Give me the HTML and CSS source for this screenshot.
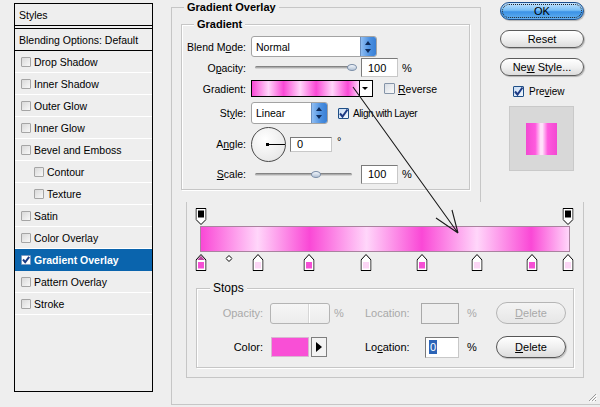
FILE: index.html
```html
<!DOCTYPE html>
<html lang="en">
<head>
  <meta charset="UTF-8" />
  <meta name="viewport" content="width=device-width, initial-scale=1.0"/>
  <title>Layer Style - Gradient Overlay</title>
  <link rel="stylesheet" href="styles.css">
</head>
<body>
  <div class="dialog">
    <ul class="styles-list">
      <li class="head">Styles</li>
      <li class="blend">Blending Options: Default</li>
      <li><span class="cb"></span>Drop Shadow</li>
      <li><span class="cb"></span>Inner Shadow</li>
      <li><span class="cb"></span>Outer Glow</li>
      <li><span class="cb"></span>Inner Glow</li>
      <li><span class="cb"></span>Bevel and Emboss</li>
      <li class="sub"><span class="cb"></span>Contour</li>
      <li class="sub"><span class="cb"></span>Texture</li>
      <li><span class="cb"></span>Satin</li>
      <li><span class="cb"></span>Color Overlay</li>
      <li class="active">
        <span class="cb on"><svg viewBox="0 0 10 10" width="10" height="10"><path d="M2 4.5L4.2 7.2L8.2 1.8" fill="none" stroke="#1b3b86" stroke-width="2"/></svg></span>Gradient Overlay
      </li>
      <li><span class="cb"></span>Pattern Overlay</li>
      <li><span class="cb"></span>Stroke</li>
    </ul>

    <div class="content">
      <div class="top-row">
        <div class="overlay-group">
          <div class="group-title">Gradient Overlay</div>

          <div class="gradient-group">
            <div class="group-title">Gradient</div>

            <div class="row r1">
              <label>Blend M<u>o</u>de:</label>
              <div class="select blend-sel"><span class="val">Normal</span><span class="spin"></span></div>
            </div>

            <div class="row r2">
              <label>O<u>p</u>acity:</label>
              <div class="slider"><span class="thumb" style="left:100%"></span></div>
              <div class="field num">100</div>
              <span class="unit">%</span>
            </div>

            <div class="row r3">
              <label>Gradient:</label>
              <div class="grad-field"></div>
              <div class="grad-drop"></div>
              <span class="chk"></span>
              <span class="chk-label"><u>R</u>everse</span>
            </div>

            <div class="row r4">
              <label>St<u>y</u>le:</label>
              <div class="select style-sel"><span class="val">Linear</span><span class="spin"></span></div>
              <span class="chk on"><svg viewBox="0 0 11 11" width="11" height="11"><path d="M2 5.5L4.5 8.5L9.5 1.5" fill="none" stroke="#1d3a84" stroke-width="2"/></svg></span>
              <span class="chk-label small">Ali<u>g</u>n with Layer</span>
            </div>

            <div class="row r5">
              <label>A<u>n</u>gle:</label>
              <div class="dial"><div class="hand"><span class="dot"></span><span class="stick"></span></div></div>
              <div class="field angle">0</div>
              <span class="deg">&deg;</span>
            </div>

            <div class="row r6">
              <label><u>S</u>cale:</label>
              <div class="slider"><span class="thumb" style="left:63%"></span></div>
              <div class="field num">100</div>
              <span class="unit">%</span>
            </div>
          </div>
        </div>

        <div class="buttons">
          <button class="btn ok">OK</button>
          <button class="btn">Reset</button>
          <button class="btn">Ne<u>w</u> Style...</button>
          <div class="preview-row">
            <span class="chk on"><svg viewBox="0 0 11 11" width="11" height="11"><path d="M2 5.5L4.5 8.5L9.5 1.5" fill="none" stroke="#1d3a84" stroke-width="2"/></svg></span>
            <span class="chk-label preview">Pre<u>v</u>iew</span>
          </div>
          <div class="preview-box"><div class="preview-swatch"></div></div>
        </div>
      </div>

      <div class="editor">
        <div class="strip">
          <div class="stops-top">
            <svg class="stop" style="left:0.4%" viewBox="0 0 11 17" width="11" height="17"><path d="M0.5 0.5H10.5V11.5L5.5 16.5L0.5 11.5Z" fill="#fff" stroke="#000"/><rect x="2.5" y="2.5" width="6" height="7" fill="#000"/></svg>
            <svg class="stop" style="left:99.5%" viewBox="0 0 11 17" width="11" height="17"><path d="M0.5 0.5H10.5V11.5L5.5 16.5L0.5 11.5Z" fill="#fff" stroke="#000"/><rect x="2.5" y="2.5" width="6" height="7" fill="#000"/></svg>
          </div>
          <div class="bar"></div>
          <div class="stops-bottom">
            <svg class="stop" style="left:0.4%" viewBox="0 0 11 17" width="11" height="17"><path d="M5.5 0.5L10.5 6V16.5H0.5V6Z" fill="#fff" stroke="#000"/><path d="M5.5 1.8L9.3 6H1.7Z" fill="#b9489d"/><rect x="2.5" y="8" width="6" height="6.5" fill="#f64fd5"/></svg>
            <svg class="mid" style="left:7.8%" viewBox="0 0 7 7" width="7" height="7"><path d="M3.5 0.5L6.5 3.5L3.5 6.5L0.5 3.5Z" fill="#fff" stroke="#000"/></svg>
            <svg class="stop" style="left:15.6%" viewBox="0 0 11 17" width="11" height="17"><path d="M5.5 0.5L10.5 6V16.5H0.5V6Z" fill="#fff" stroke="#000"/><rect x="2.5" y="8" width="6" height="6.5" fill="#fbd6f5"/></svg>
            <svg class="stop" style="left:29.5%" viewBox="0 0 11 17" width="11" height="17"><path d="M5.5 0.5L10.5 6V16.5H0.5V6Z" fill="#fff" stroke="#000"/><rect x="2.5" y="8" width="6" height="6.5" fill="#f64fd5"/></svg>
            <svg class="stop" style="left:44.9%" viewBox="0 0 11 17" width="11" height="17"><path d="M5.5 0.5L10.5 6V16.5H0.5V6Z" fill="#fff" stroke="#000"/><rect x="2.5" y="8" width="6" height="6.5" fill="#fbd6f5"/></svg>
            <svg class="stop" style="left:60%" viewBox="0 0 11 17" width="11" height="17"><path d="M5.5 0.5L10.5 6V16.5H0.5V6Z" fill="#fff" stroke="#000"/><rect x="2.5" y="8" width="6" height="6.5" fill="#f64fd5"/></svg>
            <svg class="stop" style="left:74.9%" viewBox="0 0 11 17" width="11" height="17"><path d="M5.5 0.5L10.5 6V16.5H0.5V6Z" fill="#fff" stroke="#000"/><rect x="2.5" y="8" width="6" height="6.5" fill="#fbd6f5"/></svg>
            <svg class="stop" style="left:89.7%" viewBox="0 0 11 17" width="11" height="17"><path d="M5.5 0.5L10.5 6V16.5H0.5V6Z" fill="#fff" stroke="#000"/><rect x="2.5" y="8" width="6" height="6.5" fill="#f64fd5"/></svg>
            <svg class="stop" style="left:99.5%" viewBox="0 0 11 17" width="11" height="17"><path d="M5.5 0.5L10.5 6V16.5H0.5V6Z" fill="#fff" stroke="#000"/><rect x="2.5" y="8" width="6" height="6.5" fill="#fbd6f5"/></svg>
          </div>
        </div>

        <div class="stops-group">
          <div class="group-title stops-title">Stops</div>

          <div class="stop-row disabled">
            <span class="slbl">Opacity:</span>
            <span class="combo"><span class="combo-btn"></span></span>
            <span class="pct">%</span>
            <span class="loc">Location:</span>
            <span class="field loc-in"></span>
            <span class="pct2">%</span>
            <span class="pill"><u>D</u>elete</span>
          </div>

          <div class="stop-row">
            <span class="slbl color-lbl">Color:</span>
            <span class="swatch"></span>
            <span class="swatch-btn"></span>
            <span class="loc loc2">Lo<u>c</u>ation:</span>
            <span class="field loc-in2"><span class="sel">0</span></span>
            <span class="pct2">%</span>
            <span class="pill"><u>D</u>elete</span>
          </div>
        </div>
      </div>

      <div class="grip-row">
        <svg viewBox="0 0 10 10" width="10" height="10"><path d="M9 2L2 9M9 5L5 9M9 8L8 9" stroke="#9a9a9a" stroke-width="1"/><path d="M10 3L3 10M10 6L6 10" stroke="#fff" stroke-width="1"/></svg>
      </div>
    </div>

    <svg class="pointer" viewBox="0 0 600 407" width="600" height="407">
      <path d="M353 87L458 233M458 233L436 218M458 233L452 210" fill="none" stroke="#1a1a1a" stroke-width="1.1"/>
    </svg>
  </div>
</body>
</html>
```

FILE: styles.css
```css
* {
  box-sizing: border-box;
}

body {
  margin: 0;
  width: 600px;
  height: 407px;
  overflow: hidden;
  background: #eeeeee;
  font-family: "Liberation Sans", Arial, sans-serif;
  font-size: 10.5px;
  color: #000;
}

u {
  text-decoration: underline;
  text-underline-offset: 1px;
}

.dialog {
  position: relative;
  display: flex;
  height: 407px;
}

/* left list */
.styles-list {
  list-style: none;
  margin: 3px 0 0 14px;
  padding: 0;
  width: 139px;
  height: 389px;
  border: 1px solid #000;
  background: #eeeeee;
}

.styles-list li {
  display: flex;
  align-items: center;
  height: 22px;
  padding-left: 6px;
  border-bottom: 1px solid #fff;
  white-space: nowrap;
}

.styles-list li.head {
  height: 22px;
  padding-left: 4px;
  border-bottom: 1px solid #000;
}

.styles-list li.blend {
  height: 23px;
  margin-top: 2px;
  padding-left: 4px;
  border-top: 1px solid #000;
  border-bottom: 1px solid #000;
}

.styles-list li.sub {
  padding-left: 19px;
}

.styles-list li.active {
  background: #0a64ad;
  color: #fff;
  font-weight: bold;
  border-bottom-color: #0a64ad;
}

.cb {
  width: 10px;
  height: 10px;
  margin-right: 3px;
  border: 1px solid #a5a5a5;
  border-radius: 1px;
  background: linear-gradient(135deg, #d9d9d9, #f8f8f8);
  flex: none;
}

.cb.on {
  border-color: #7f9bc2;
  background: #fff;
  display: flex;
}

.cb.on svg {
  margin: -1px;
}

/* right content */
.content {
  margin: 7px 0 0 18px;
  width: 429px;
  height: 398px;
  border-left: 1px solid #c6c6c6;
  border-bottom: 1px solid #c6c6c6;
  display: flex;
  flex-direction: column;
}

.top-row {
  display: flex;
  height: 195px;
}

.overlay-group {
  width: 309px;
  height: 195px;
  border-top: 1px solid #c6c6c6;
  border-right: 1px solid #c6c6c6;
}

.group-title {
  width: max-content;
  margin: -8px 0 0 12px;
  padding: 0 3px;
  line-height: 14px;
  background: #eeeeee;
  font-weight: bold;
  font-size: 11px;
}

.gradient-group {
  margin: 10px 0 0 9px;
  width: 289px;
  height: 166px;
  border: 1px solid #c6c6c6;
  box-shadow: inset 1px 1px 0 #fff, 1px 1px 0 #fff;
}

.row {
  display: flex;
  align-items: center;
  height: 21px;
}

.row label {
  width: 64px;
  margin-right: 5px;
  text-align: right;
  flex: none;
}

.r1 { margin-top: 5px; }
.r4 { margin-top: 2px; height: 24px; }
.r5 { margin-top: 1px; height: 36px; }
.r6 { margin-top: 2px; height: 20px; }

.select {
  display: flex;
  align-items: stretch;
  border: 1px solid #a3a3a3;
  border-radius: 3px;
  background: #fff;
  overflow: hidden;
}

.select .val {
  flex: 1;
  display: flex;
  align-items: center;
  padding-left: 4px;
}

.spin {
  width: 16px;
  position: relative;
  background: linear-gradient(90deg, #8fbdf2, #4a8fe0 60%, #3a7fd4);
  border-left: 1px solid #6a8fc0;
}

.spin::before,
.spin::after {
  content: "";
  position: absolute;
  left: 4px;
  border-left: 3.5px solid transparent;
  border-right: 3.5px solid transparent;
}

.spin::before {
  top: calc(50% - 6px);
  border-bottom: 4px solid #0d2a5a;
}

.spin::after {
  top: calc(50% + 2px);
  border-top: 4px solid #0d2a5a;
}

.blend-sel {
  width: 126px;
  height: 21px;
}

.style-sel {
  width: 77px;
  height: 22px;
}

.slider {
  position: relative;
  margin-left: 4px;
  width: 97px;
  height: 3px;
  border-radius: 2px;
  background: linear-gradient(#6f6f6f, #b9b9b9 60%, #e4e4e4);
}

.thumb {
  position: absolute;
  top: -2px;
  width: 10px;
  height: 7px;
  margin-left: -5px;
  border-radius: 50%;
  border: 1px solid #7c8fa8;
  background: linear-gradient(#f2f6fb, #b4c3d6);
}

.field {
  display: flex;
  align-items: center;
  background: #fff;
  border: 1px solid #7a7a7a;
  border-right-color: #c8c8c8;
  border-bottom-color: #c8c8c8;
  padding-left: 6px;
  font-size: 11px;
}

.field.num {
  margin-left: 9px;
  width: 37px;
  height: 19px;
}

.unit {
  margin-left: 4px;
  font-size: 11px;
}

.grad-field {
  width: 109px;
  height: 17px;
  border: 1px solid #000;
  background: linear-gradient(90deg, #fa48d6 0%, #ffd6fa 15.4%, #fa48d6 29.5%, #ffd6fa 45%, #fa48d6 60%, #ffd6fa 75%, #fa48d6 89.7%, #ffd6fa 100%);
}

.grad-drop {
  position: relative;
  width: 13px;
  height: 17px;
  border: 1px solid #000;
  border-left: none;
  background: #fff;
}

.grad-drop::after {
  content: "";
  position: absolute;
  left: 2px;
  top: 6px;
  border-left: 3.5px solid transparent;
  border-right: 3.5px solid transparent;
  border-top: 3.5px solid #000;
}

.chk {
  width: 11px;
  height: 11px;
  margin-left: 11px;
  border: 1px solid #8594a8;
  border-radius: 1px;
  background: linear-gradient(135deg, #d8dde4, #fbfbfb);
  flex: none;
  display: flex;
}

.chk.on {
  border-color: #1f4f86;
  background: linear-gradient(135deg, #c8dcf4, #f2f7fd);
}

.chk.on svg {
  margin: -1px;
}

.chk-label {
  margin-left: 3px;
  font-size: 10.5px;
}

.r4 .chk {
  margin-left: 10px;
}

.chk-label.small {
  margin-left: 4px;
  font-size: 10px;
  letter-spacing: -0.4px;
}

.dial {
  width: 35px;
  height: 35px;
  border: 1px solid #4a4a4a;
  border-radius: 50%;
  background: radial-gradient(circle at 40% 35%, #ffffff, #eaeaea 70%, #d6d6d6);
  display: flex;
  align-items: center;
  justify-content: flex-end;
}

.hand {
  width: 18px;
  display: flex;
  align-items: center;
}

.dot {
  width: 3px;
  height: 3px;
  margin-left: -1px;
  background: #000;
}

.stick {
  flex: 1;
  height: 1px;
  background: #000;
}

.field.angle {
  margin-left: 4px;
  width: 42px;
  height: 15px;
}

.deg {
  align-self: flex-start;
  margin: 9px 0 0 5px;
  font-size: 11px;
}

/* buttons */
.buttons {
  width: 84px;
  margin: -5px 0 0 19px;
  display: flex;
  flex-direction: column;
}

.btn {
  height: 18px;
  margin: 0 0 10px 0;
  padding: 0;
  border: 1px solid #5c5c5c;
  border-radius: 9px;
  background: linear-gradient(#ffffff, #f1f1f1 50%, #dcdcdc);
  box-shadow: 1px 1px 1px rgba(0, 0, 0, 0.25);
  font-family: "Liberation Sans", Arial, sans-serif;
  font-size: 11px;
  color: #000;
}

.btn.ok {
  border-color: #1d4f8c;
  background: linear-gradient(#c6e6ff, #79bff5 45%, #3b92e6 55%, #64b0f0);
  outline: 1px dotted #222;
  outline-offset: -3px;
}

.preview-row {
  display: flex;
  align-items: center;
  height: 12px;
  margin-top: -1px;
}

.preview-row .chk {
  margin-left: 13px;
}

.chk-label.preview {
  margin-left: 5px;
  font-size: 10px;
}

.preview-box {
  margin: 9px 0 0 9px;
  width: 65px;
  height: 65px;
  border: 1px solid #c9c9c9;
  background: #d8d8d8;
  display: flex;
  align-items: center;
  justify-content: center;
}

.preview-swatch {
  width: 31px;
  height: 32px;
  background: linear-gradient(90deg, #f24ad2 0%, #ff5ade 30%, #ffe0fa 47%, #ffe0fa 53%, #ff5ade 70%, #f24ad2 100%);
}

/* gradient editor */
.editor {
  margin: 0 0 0 14px;
  width: 398px;
  height: 176px;
  border-left: 1px solid #c6c6c6;
  border-right: 1px solid #c6c6c6;
  border-bottom: 1px solid #c6c6c6;
}

.strip {
  margin: 6px 0 0 13px;
  width: 370px;
}

.stops-top,
.stops-bottom {
  position: relative;
  height: 18px;
}

.stops-bottom {
  height: 19px;
}

.stop {
  position: absolute;
  top: 0;
  transform: translateX(-50%);
}

.stops-bottom .stop {
  top: 2px;
}

.mid {
  position: absolute;
  top: 3px;
  transform: translateX(-50%);
}

.bar {
  height: 26px;
  border: 1px solid #a9839f;
  background: linear-gradient(90deg, #fa48d6 0%, #ffd6fa 15.4%, #fa48d6 29.5%, #ffd6fa 45%, #fa48d6 60%, #ffd6fa 75%, #fa48d6 89.7%, #ffd6fa 100%);
}

.stops-group {
  margin: 17px 0 0 9px;
  width: 378px;
  height: 80px;
  border: 1px solid #c6c6c6;
  box-shadow: inset 1px 1px 0 #fff, 1px 1px 0 #fff;
}

.stops-title {
  font-weight: normal;
  font-size: 12px;
  margin-left: 13px;
}

.stop-row {
  display: flex;
  align-items: center;
  height: 22px;
  margin-top: 7px;
  font-size: 11px;
}

.stop-row + .stop-row {
  margin-top: 12px;
}

.stop-row.disabled {
  color: #a9a9a9;
}

.slbl {
  width: 66px;
  text-align: right;
  flex: none;
}

.combo {
  margin-left: 7px;
  width: 60px;
  height: 21px;
  border: 1px solid #b4b4b4;
  border-radius: 3px;
  background: linear-gradient(#f6f6f6, #ececec);
  display: flex;
  justify-content: flex-end;
}

.combo-btn {
  width: 20px;
  border-left: 1px solid #fff;
  box-shadow: -1px 0 0 #d6d6d6;
}

.pct {
  margin-left: 4px;
  width: 31px;
}

.loc {
  width: 56px;
}

.field.loc-in {
  width: 38px;
  height: 21px;
  background: #eeeeee;
  border-color: #a9a9a9;
}

.pct2 {
  margin-left: 8px;
}

.pill {
  margin: 0 7px 0 auto;
  width: 70px;
  height: 22px;
  border: 1px solid #b5b5b5;
  border-radius: 11px;
  display: flex;
  align-items: center;
  justify-content: center;
  background: linear-gradient(#f4f4f4, #e6e6e6);
}

.stop-row:not(.disabled) .pill {
  border-color: #555;
  background: linear-gradient(#ffffff, #f0f0f0 50%, #dcdcdc);
  box-shadow: 1px 1px 1px rgba(0, 0, 0, 0.2);
}

.color-lbl {
  width: 66px;
}

.swatch {
  margin-left: 8px;
  width: 38px;
  height: 20px;
  background: #f94fd6;
  border: 1px solid #d8b6d0;
}

.swatch-btn {
  position: relative;
  margin-left: 2px;
  width: 16px;
  height: 20px;
  border: 1px solid #7e7e7e;
  background: #f3f3f3;
}

.swatch-btn::after {
  content: "";
  position: absolute;
  left: 4px;
  top: 4px;
  border-top: 5px solid transparent;
  border-bottom: 5px solid transparent;
  border-left: 6px solid #000;
}

.loc2 {
  margin-left: 38px;
  width: 60px;
}

.field.loc-in2 {
  width: 34px;
  height: 21px;
  padding-left: 3px;
}

.sel {
  background: #2c64b7;
  color: #fff;
  padding: 0 1px;
  line-height: 14px;
}

.grip-row {
  margin-top: auto;
  display: flex;
  justify-content: flex-end;
  padding: 0 3px 2px 0;
}

.pointer {
  position: absolute;
  top: 0;
  left: 0;
  pointer-events: none;
}
```
